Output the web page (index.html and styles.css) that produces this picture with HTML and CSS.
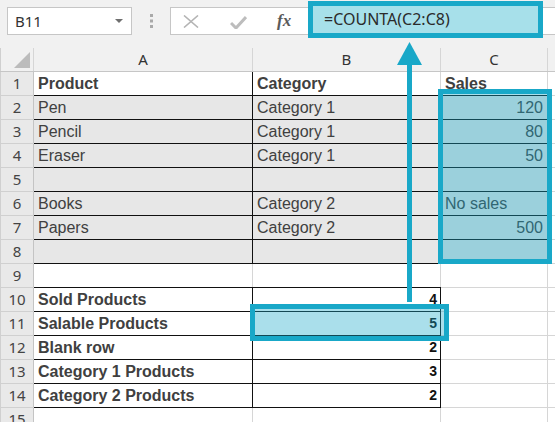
FILE: index.html
```html
<!DOCTYPE html>
<html lang="en">
<head>
    <meta charset="UTF-8">
    <meta name="viewport" content="width=device-width, initial-scale=1.0">
    <title>COUNTA example</title>
    <link rel="stylesheet" href="styles.css">
</head>
<body>
    <div class="toolbar">
        <div class="name-box">
            <span>B11</span>
            <svg class="caret" width="8" height="4" viewBox="0 0 8 4"><path d="M0 0H8L4 4Z" fill="#6f6f6f"/></svg>
        </div>
        <svg class="grip" width="3" height="14" viewBox="0 0 3 14">
            <rect x="0" y="0" width="3" height="3" fill="#a9a9a9"/>
            <rect x="0" y="5.5" width="3" height="3" fill="#a9a9a9"/>
            <rect x="0" y="11" width="3" height="3" fill="#a9a9a9"/>
        </svg>
        <div class="formula-bar">
            <svg class="btn-cancel" width="16" height="13" viewBox="0 0 16 13"><path d="M1 0.5L15 12.5M15 0.5L1 12.5" stroke="#b4b4b4" stroke-width="1.6" fill="none"/></svg>
            <svg class="btn-enter" width="17" height="13" viewBox="0 0 17 13"><path d="M1 7L6 12L16 1" stroke="#bdbdbd" stroke-width="3" fill="none"/></svg>
            <span class="fx">fx</span>
        </div>
    </div>

    <table class="sheet">
        <colgroup>
            <col class="col-head">
            <col class="col-a">
            <col class="col-b">
            <col class="col-c">
            <col class="col-d">
        </colgroup>
        <tr class="letters">
            <th class="corner"><span class="corner-tri"></span></th>
            <th>A</th>
            <th>B</th>
            <th>C</th>
            <th></th>
        </tr>
        <tr>
            <th>1</th>
            <td class="data line sep title">Product</td>
            <td class="data line title">Category</td>
            <td class="data line title">Sales</td>
            <td></td>
        </tr>
        <tr class="shaded">
            <th>2</th>
            <td class="data line sep">Pen</td>
            <td class="data line">Category 1</td>
            <td class="data line num">120</td>
            <td></td>
        </tr>
        <tr class="shaded">
            <th>3</th>
            <td class="data line sep">Pencil</td>
            <td class="data line">Category 1</td>
            <td class="data line num">80</td>
            <td></td>
        </tr>
        <tr class="shaded">
            <th>4</th>
            <td class="data line sep">Eraser</td>
            <td class="data line">Category 1</td>
            <td class="data line num">50</td>
            <td></td>
        </tr>
        <tr class="shaded">
            <th>5</th>
            <td class="data line sep"></td>
            <td class="data line"></td>
            <td class="data line"></td>
            <td></td>
        </tr>
        <tr class="shaded">
            <th>6</th>
            <td class="data line sep">Books</td>
            <td class="data line">Category 2</td>
            <td class="data line">No sales</td>
            <td></td>
        </tr>
        <tr class="shaded">
            <th>7</th>
            <td class="data line sep">Papers</td>
            <td class="data line">Category 2</td>
            <td class="data line num">500</td>
            <td></td>
        </tr>
        <tr class="shaded">
            <th>8</th>
            <td class="data line sep"></td>
            <td class="data line"></td>
            <td class="data line"></td>
            <td></td>
        </tr>
        <tr>
            <th>9</th>
            <td class="line"></td>
            <td class="line"></td>
            <td></td>
            <td></td>
        </tr>
        <tr>
            <th>10</th>
            <td class="data line sep title">Sold Products</td>
            <td class="line sep result">4</td>
            <td></td>
            <td></td>
        </tr>
        <tr>
            <th>11</th>
            <td class="data line sep title">Salable Products</td>
            <td class="line sep result">5</td>
            <td></td>
            <td></td>
        </tr>
        <tr>
            <th>12</th>
            <td class="data line sep title">Blank row</td>
            <td class="line sep result">2</td>
            <td></td>
            <td></td>
        </tr>
        <tr>
            <th>13</th>
            <td class="data line sep title">Category 1 Products</td>
            <td class="line sep result">3</td>
            <td></td>
            <td></td>
        </tr>
        <tr>
            <th>14</th>
            <td class="data line sep title">Category 2 Products</td>
            <td class="line sep result">2</td>
            <td></td>
            <td></td>
        </tr>
        <tr>
            <th>15</th>
            <td></td>
            <td></td>
            <td></td>
            <td></td>
        </tr>
    </table>

    <!-- callouts drawn over the sheet -->
    <div class="mark mark-formula">=COUNTA(C2:C8)</div>
    <div class="mark mark-range"></div>
    <div class="mark mark-cell"></div>
    <svg class="arrow" width="28" height="262" viewBox="0 0 28 262">
        <path d="M13.5 0L1 23H26Z" fill="#19a8c8"/>
        <rect x="11" y="21" width="5" height="239" fill="#19a8c8"/>
    </svg>
</body>
</html>
```

FILE: styles.css
```css
body {
    margin: 0;
    background: #ffffff;
    font-family: "Liberation Sans", Arial, sans-serif;
    overflow: hidden;
    position: relative;
}
.toolbar {
    height: 48px;
    background: #f1f1f1;
    display: flex;
    align-items: flex-start;
    padding-top: 7px;
    box-sizing: border-box;
}
.name-box {
    width: 125px;
    height: 28px;
    margin-left: 7px;
    box-sizing: border-box;
    border: 1px solid #c6c6c6;
    background: #ffffff;
    display: flex;
    align-items: center;
    justify-content: space-between;
    padding: 0 8px 0 7px;
    font-family: "Noto Sans", sans-serif;
    font-size: 15px;
    color: #333333;
}
.grip {
    margin: 7px 0 0 18px;
}
.formula-bar {
    flex: 1;
    height: 28px;
    margin-left: 17px;
    box-sizing: border-box;
    border: 1px solid #c6c6c6;
    border-right: none;
    background: #ffffff;
    display: flex;
    align-items: center;
    padding-left: 12px;
}
.btn-cancel {
    margin-top: 1px;
}
.btn-enter {
    margin-left: 31px;
    margin-top: 3px;
}
.fx {
    margin-left: 30px;
    font-family: "Liberation Serif", serif;
    font-style: italic;
    font-weight: bold;
    font-size: 17px;
    color: #5a5a5a;
}
.sheet {
    border-collapse: collapse;
    table-layout: fixed;
    width: 600px;
}
.col-head { width: 33px; }
.col-a { width: 219px; }
.col-b { width: 188px; }
.col-c { width: 107px; }
.col-d { width: 53px; }
.sheet th,
.sheet td {
    height: 23px;
    padding: 0 4px;
    border: 1px solid #d6d6d6;
    line-height: 23px;
    font-size: 16px;
    white-space: nowrap;
    overflow: hidden;
    box-sizing: border-box;
}
.sheet th {
    background: #e9e9e9;
    border-color: #d0d0d0;
    font-family: "Noto Sans", sans-serif;
    font-weight: normal;
    font-size: 15px;
    color: #444444;
    text-align: center;
    padding: 0;
    border-right-color: #c4c4c4;
}
.letters th {
    background: #f1f1f1;
    border-top: none;
    border-bottom-color: #c6c6c6;
    border-right-color: #d6d6d6;
    color: #333333;
}
.letters th:last-child {
    border-right: none;
}
.corner {
    position: relative;
}
.corner-tri {
    position: absolute;
    right: 3px;
    bottom: 3px;
    width: 0;
    height: 0;
    border-left: 16px solid transparent;
    border-bottom: 16px solid #bcbcbc;
}
.sheet td {
    color: #404040;
    text-align: left;
}
.shaded td.data {
    background: #e7e7e7;
}
.sheet td.line {
    border-bottom-color: #111111;
}
.sheet td.sep {
    border-right-color: #111111;
}
.title {
    font-weight: bold;
    color: #323e50;
}
.sheet td.num {
    text-align: right;
}
.sheet td.result {
    text-align: right;
    font-weight: bold;
    font-size: 14px;
    color: #111111;
    padding-right: 3px;
}
.mark {
    position: absolute;
    box-sizing: border-box;
    border: 5px solid #19a8c8;
    background: rgba(25, 168, 200, 0.37);
}
.mark-formula {
    left: 308px;
    top: 1px;
    width: 235px;
    height: 37px;
    background: #a7e0ea;
    padding-left: 11px;
    font-family: "Noto Sans", sans-serif;
    font-size: 16px;
    line-height: 27px;
    color: #2b2b2b;
}
.mark-range {
    left: 438px;
    top: 89px;
    width: 114px;
    height: 175px;
}
.mark-cell {
    left: 250px;
    top: 304px;
    width: 199px;
    height: 37px;
}
.arrow {
    position: absolute;
    left: 396px;
    top: 42px;
}
```
